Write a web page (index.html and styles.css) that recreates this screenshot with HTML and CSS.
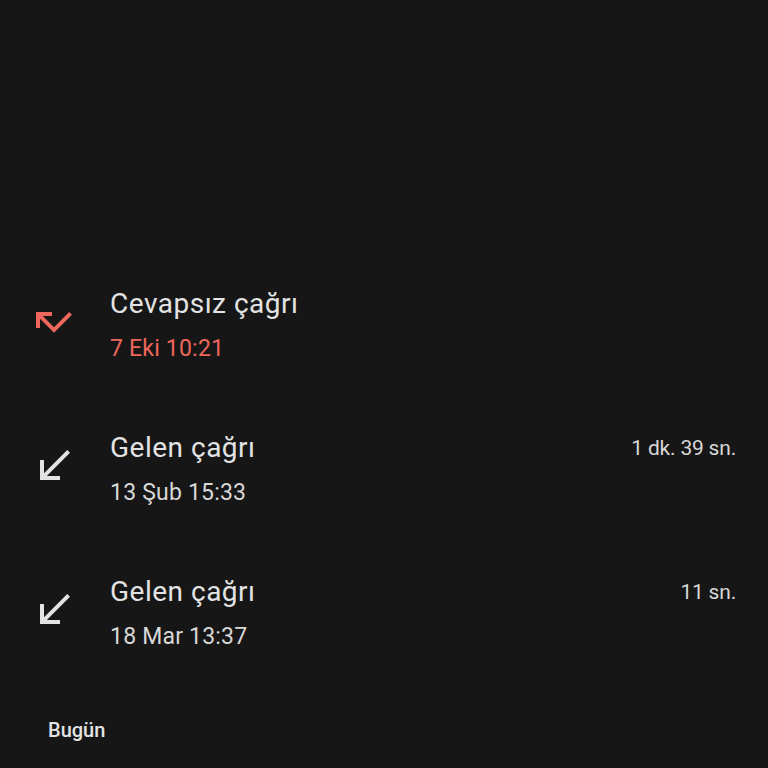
FILE: index.html
```html
<!DOCTYPE html>
<html lang="tr">
<head>
<meta charset="utf-8">
<title>Arama geçmişi</title>
<link rel="stylesheet" href="styles.css">
</head>
<body>
<main class="screen">
  <ul class="calls">
    <li class="call">
      <svg class="call-icon missed" viewBox="0 0 24 24" aria-hidden="true"><path d="M19.59 7L12 14.59 6.41 9H11V7H3v8h2v-4.59l7 7 9-9z"/></svg>
      <div class="call-text">
        <div class="call-title">Cevapsız çağrı</div>
        <div class="call-date missed-date">7 Eki 10:21</div>
      </div>
    </li>
    <li class="call">
      <svg class="call-icon" viewBox="0 0 24 24" aria-hidden="true"><path d="M20 5.41L18.59 4 7 15.59V9H5v10h10v-2H8.41z"/></svg>
      <div class="call-text">
        <div class="call-title">Gelen çağrı</div>
        <div class="call-date">13 Şub 15:33</div>
      </div>
      <div class="call-duration">1 dk. 39 sn.</div>
    </li>
    <li class="call">
      <svg class="call-icon" viewBox="0 0 24 24" aria-hidden="true"><path d="M20 5.41L18.59 4 7 15.59V9H5v10h10v-2H8.41z"/></svg>
      <div class="call-text">
        <div class="call-title">Gelen çağrı</div>
        <div class="call-date">18 Mar 13:37</div>
      </div>
      <div class="call-duration">11 sn.</div>
    </li>
  </ul>
  <h2 class="section-label">Bugün</h2>
</main>
</body>
</html>
```
FILE: styles.css
```css
html, body {
  margin: 0;
  padding: 0;
  background: #161616;
}
body {
  font-family: Roboto, "Noto Sans", sans-serif;
  color: #e3e3e3;
  width: 768px;
  height: 768px;
  overflow: hidden;
}
.screen {
  padding-top: 253px;
}
.calls {
  list-style: none;
  margin: 0;
  padding: 0;
}
.call {
  display: flex;
  align-items: center;
  height: 144px;
  box-sizing: border-box;
  padding: 33px 32px 33px 30px;
}
.call-icon {
  width: 48px;
  height: 48px;
  flex: none;
  fill: #e3e3e3;
  margin-right: 32px;
  margin-bottom: 6px;
}
.call-icon.missed {
  fill: #ee675c;
}
.call-text {
  flex: 1;
  display: flex;
  flex-direction: column;
}
.call-title {
  font-size: 28px;
  line-height: 36px;
  letter-spacing: 0.5px;
  color: #e3e3e3;
}
.call-date {
  font-size: 23px;
  line-height: 30px;
  letter-spacing: 0.2px;
  margin-top: 12px;
  color: #d8d8d8;
}
.missed-date {
  color: #ee675c;
}
.call-duration {
  align-self: flex-start;
  font-size: 21px;
  line-height: 30px;
  margin-top: 3px;
  color: #d8d8d8;
  letter-spacing: -0.2px;
}
.section-label {
  margin: 33px 0 0 48px;
  font-size: 20px;
  line-height: 24px;
  font-weight: 500;
  color: #e3e3e3;
}
```
